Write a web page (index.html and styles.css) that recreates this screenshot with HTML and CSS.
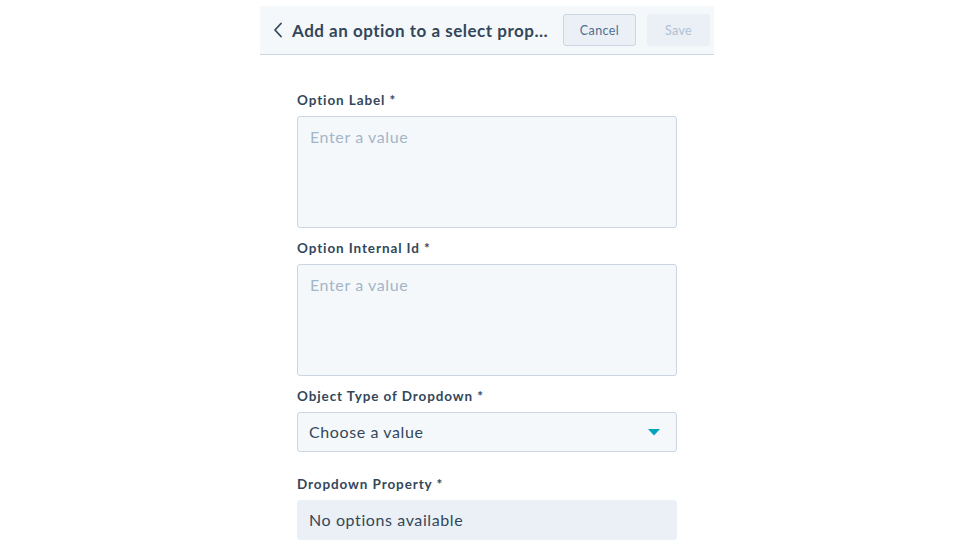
FILE: index.html
```html
<!DOCTYPE html>
<html lang="en">
<head>
<meta charset="utf-8">
<title>Add an option to a select property</title>
<link rel="stylesheet" href="styles.css">
</head>
<body>
<div class="panel">
  <header class="panel-header">
    <button class="back" aria-label="Back">
      <svg width="10" height="16" viewBox="0 0 10 16"><path d="M8 1.5 L2 8 L8 14.5" fill="none" stroke="#33475b" stroke-width="1.8" stroke-linecap="round" stroke-linejoin="round"/></svg>
    </button>
    <h1 class="title">Add an option to a select property</h1>
    <div class="actions">
      <button class="btn btn-cancel">Cancel</button>
      <button class="btn btn-save" disabled>Save</button>
    </div>
  </header>
  <form class="form">
    <div class="field">
      <label class="label">Option Label *</label>
      <textarea class="textarea" placeholder="Enter a value"></textarea>
    </div>
    <div class="field">
      <label class="label">Option Internal Id *</label>
      <textarea class="textarea" placeholder="Enter a value"></textarea>
    </div>
    <div class="field field-select">
      <label class="label">Object Type of Dropdown *</label>
      <div class="select">
        <span>Choose a value</span>
        <svg class="caret" width="12" height="7" viewBox="0 0 12 7"><path d="M0 0 H12 L6 6.5 Z" fill="#00a4bd"/></svg>
      </div>
    </div>
    <div class="field">
      <label class="label">Dropdown Property *</label>
      <div class="select select-disabled"><span>No options available</span></div>
    </div>
  </form>
</div>
</body>
</html>
```

FILE: styles.css
```css
html, body {
  margin: 0;
  padding: 0;
  background: #ffffff;
}
body {
  font-family: "Lato", "Noto Sans", sans-serif;
  color: #33475b;
}
.panel {
  width: 454px;
  margin: 6px 0 0 260px;
}
.panel-header {
  display: flex;
  align-items: center;
  height: 48px;
  background: #f5f8fa;
  border-bottom: 1px solid #cbd6e2;
  padding: 0 4px 0 12px;
  box-sizing: content-box;
}
.back {
  display: flex;
  align-items: center;
  justify-content: center;
  width: 12px;
  height: 20px;
  padding: 0;
  border: 0;
  background: transparent;
  margin-right: 8px;
}
.title {
  flex: 1;
  min-width: 0;
  margin: 0;
  font-size: 17px;
  font-weight: 700;
  color: #33475b;
  white-space: nowrap;
  overflow: hidden;
  text-overflow: ellipsis;
  letter-spacing: 0.5px;
}
.actions {
  display: flex;
  gap: 11px;
  margin-left: 7px;
}
.btn {
  height: 32px;
  border-radius: 3px;
  font-family: inherit;
  font-size: 12.5px;
  letter-spacing: 0.4px;
  padding: 0;
}
.btn-cancel {
  width: 73px;
  background: #eaf0f6;
  border: 1px solid #cbd6e2;
  color: #506e91;
}
.btn-save {
  width: 63px;
  background: #eaf0f6;
  border: 1px solid #eaf0f6;
  color: #b0c1d4;
}
.form {
  padding: 35px 0 0 37px;
  width: 380px;
}
.field {
  display: flex;
  flex-direction: column;
  margin-bottom: 10px;
}
.field-select {
  margin-bottom: 22px;
}
.label {
  font-size: 13.5px;
  font-weight: 700;
  line-height: 20px;
  margin-bottom: 6px;
  letter-spacing: 0.9px;
  color: #33475b;
}
.textarea {
  box-sizing: border-box;
  width: 380px;
  height: 112px;
  resize: none;
  background: #f5f8fa;
  border: 1px solid #cbd6e2;
  border-radius: 3px;
  padding: 9px 12px;
  font-family: inherit;
  font-size: 16px;
  line-height: 22px;
  letter-spacing: 0.6px;
  color: #33475b;
  margin: 0;
}
.textarea::placeholder {
  color: #a3b5c9;
}
.select {
  box-sizing: border-box;
  height: 40px;
  display: flex;
  align-items: center;
  justify-content: space-between;
  background: #f5f8fa;
  border: 1px solid #cbd6e2;
  border-radius: 3px;
  padding: 0 16px 0 11px;
  font-size: 16px;
  line-height: 20px;
  letter-spacing: 0.6px;
  color: #33475b;
}
.select span {
  margin-top: -1px;
}
.select-disabled {
  background: #eaf0f6;
  border-color: #eaf0f6;
}
.caret {
  display: block;
}
```
